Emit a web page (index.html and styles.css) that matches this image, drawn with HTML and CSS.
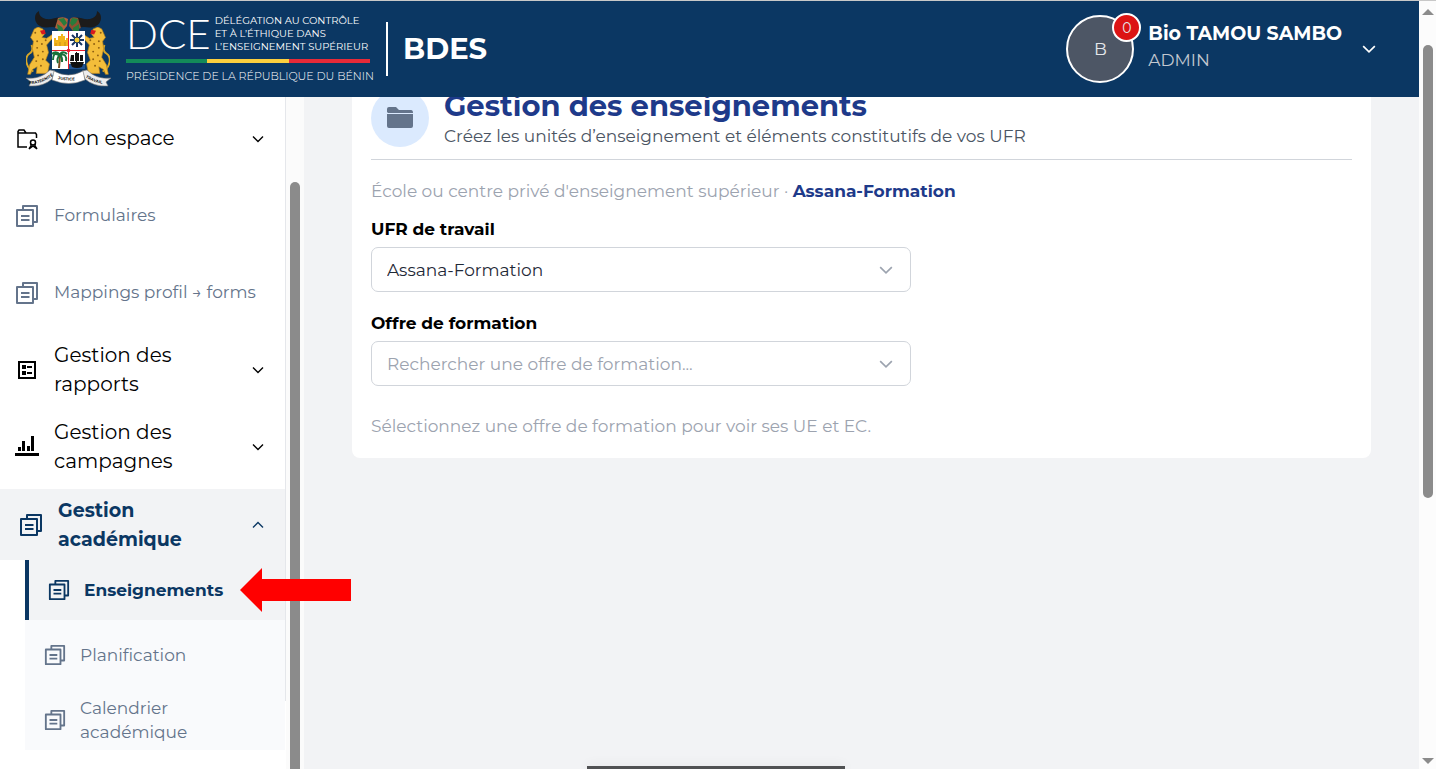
FILE: index.html
```html
<!DOCTYPE html>
<html lang="fr">
<head>
<meta charset="utf-8">
<meta name="viewport" content="width=device-width, initial-scale=1">
<title>BDES - Gestion des enseignements</title>
<link rel="stylesheet" href="styles.css">
</head>
<body>
<svg class="defs" width="0" height="0" aria-hidden="true">
  <symbol id="pages" viewBox="0 0 24 24"><g fill="none" stroke="currentColor" stroke-width="2" stroke-linejoin="round"><path d="M2 6h16v16H2z"/><path d="M8 6V2h14v16h-4M6 12h8.500M6 16h8.500"/></g></symbol>
  <symbol id="chevron" viewBox="0 0 12 8"><path d="M1 1.500l5 5 5-5" fill="none" stroke="currentColor" stroke-width="1.400"/></symbol>
  <symbol id="leopard" viewBox="0 0 28 56"><path d="M7 47C-1 43-3 32 3 28c4-2 3-7 2-9" fill="none" stroke="#d9a827" stroke-width="2"/><path d="M8 2l4-2 5 2 2 5-3 4 5 1 6-4 1 3-7 8 2 8-3 8 4 4-2 10H10l1-7-5 3-2 5H1l2-10 5-8-2-9 1-8-3-4z" fill="#f3bd3a" stroke="#b98218" stroke-width=".7"/><path d="M14 4l5-1 1 4-4 1z" fill="#d71920"/><g fill="#8d5f12"><circle cx="9" cy="6" r="1"/><circle cx="11" cy="15" r="1"/><circle cx="16" cy="18" r="1"/><circle cx="11" cy="22" r="1"/><circle cx="17" cy="26" r="1"/><circle cx="12" cy="30" r="1"/><circle cx="17" cy="34" r="1"/><circle cx="10" cy="36" r="1"/><circle cx="15" cy="41" r="1"/><circle cx="20" cy="14" r="1"/></g></symbol>
</svg>

<div class="window">
  <div class="app">
    <header class="topbar">
      <div class="brand">
        <svg class="crest" viewBox="0 0 88 78" role="img" aria-label="Armoiries du Bénin">
          <use href="#leopard" x="2" y="17" width="28" height="53"/>
          <use href="#leopard" width="28" height="53" transform="translate(86 17) scale(-1 1)"/>
          <path d="M15 1c-4 2-5 7-3 11 3 6 10 6 16 5 4 0 6 1 8 3l3-12c-6-2-10 2-17 1-4-1-7-3-7-8zM73 1c4 2 5 7 3 11-3 6-10 6-16 5-4 0-6 1-8 3L49 8c6-2 10 2 17 1 4-1 7-3 7-8z" fill="#1c1b1b"/>
          <path d="M34 8q6-2 10 1l-1 7-4 5-8-3z" fill="#b0603a"/><path d="M54 8q-6-2-8 1l-1 7 4 5 8-3z" fill="#8d5030"/>
          <path d="M34 9l6-1 3 5-3 3-3-4zM33 14l5 3 2 4h-6zM54 9l-6-1-2 5 2 3 4-3zM55 14l-6 4v3h6z" fill="#287c3b"/>
          <path d="M28 21h33v38H28z" fill="#fff"/>
          <path d="M44.500 54H61v5H44.500z" fill="#225391"/>
          <path d="M30 36v-8h2v2h2v-4h3v-2h2v2h2v4h1v-2h2v8z" fill="#f2b61c"/><path d="M32 33v3m4-4v4m5-4v4" stroke="#c98d18"/>
          <path d="M53 23v14M46 30h14M48 25l10 10m0-10l-10 10" stroke="#173763" stroke-width="2"/><circle cx="53" cy="30" r="3" fill="#f6cf35" stroke="#173763"/>
          <path d="M36 46l-1 12" stroke="#754b20" stroke-width="2"/><path d="M36 46c-6-5-7 0-7 4M36 45c-3-4-6-3-8-1M36 45c1-4 5-3 7-1M36 45c5-2 7 2 6 6M36 45c-3 2-3 6-2 8M36 45c3 3 2 6 2 7" fill="none" stroke="#18713a" stroke-width="2"/>
          <path d="M46 52h14l-2 5q-5 2-10 0zM47 45h3v6h-4zM51 43h4v8h-4zM56 45h3v6h-3zM52 42h1v11h-1z" fill="#111"/>
          <path d="M28 40.500h33M44.500 21v38" stroke="#e61b2b"/><circle cx="44.500" cy="40.500" r="1.800" fill="#e61b2b"/>
          <path d="M2 68q14 2 24-8l5 1-3 8q-9 8-23 7l2-4zM87 68q-14 2-24-8l-5 1 3 8q9 8 23 7l-2-4z" fill="#ededed" stroke="#777" stroke-width=".6"/>
          <path d="M30 61q14 8 29 0l2 9q-16 7-33 0z" fill="#fff" stroke="#777" stroke-width=".6"/>
          <path id="motto-left" d="M5 74q14 0 25-9" fill="none"/>
          <path id="motto-mid" d="M31 68q14 5 29 0" fill="none"/>
          <path id="motto-right" d="M60 66q10 8 25 8" fill="none"/>
          <g class="motto"><text><textPath href="#motto-left">FRATERNITÉ</textPath></text><text><textPath href="#motto-mid" startOffset="3">JUSTICE</textPath></text><text><textPath href="#motto-right" startOffset="2">TRAVAIL</textPath></text></g>
        </svg>
        <div class="identity">
          <div class="identity-main"><span class="dce">DCE</span><span class="delegation">DÉLÉGATION AU CONTRÔLE<br>ET À L’ÉTHIQUE DANS<br>L’ENSEIGNEMENT SUPÉRIEUR</span></div>
          <div class="flag"></div>
          <div class="presidency">PRÉSIDENCE DE LA RÉPUBLIQUE DU BÉNIN</div>
        </div>
        <div class="product">BDES</div>
      </div>
      <button class="account" type="button">
        <span class="avatar">B<span class="badge">0</span></span>
        <span class="account-text"><strong>Bio TAMOU SAMBO</strong><span>ADMIN</span></span>
        <svg class="account-chevron"><use href="#chevron"/></svg>
      </button>
    </header>

    <div class="body">
      <aside class="sidebar">
        <nav class="nav">
          <button class="item" type="button">
            <svg class="icon" viewBox="0 0 24 24" fill="none" stroke="currentColor" stroke-width="1.500"><path d="M12 20H3V4.500L4 3h5l2 3h9.500l1 1.500V11M3 6h8"/><circle cx="18" cy="15.500" r="2.500"/><path d="M16 17v2l-2 3M20 17v2l2 3M14 22l4-3 4 3"/></svg>
            <span class="label">Mon espace</span><svg class="chevron"><use href="#chevron"/></svg></button>
          <a class="item link" href="#formulaires"><svg class="icon"><use href="#pages"/></svg><span class="label">Formulaires</span></a>
          <a class="item link" href="#mappings"><svg class="icon"><use href="#pages"/></svg><span class="label">Mappings profil → forms</span></a>
          <button class="item" type="button">
            <svg class="icon" viewBox="0 0 24 24"><path d="M4 4h16v16H4z" fill="none" stroke="currentColor" stroke-width="2"/><path d="M7 7h4v4H7zM12 8h5v2h-5zM7 13h4v4H7zM12 14h5v2h-5z"/></svg>
            <span class="label">Gestion des rapports</span><svg class="chevron"><use href="#chevron"/></svg></button>
          <button class="item" type="button">
            <svg class="icon" viewBox="0 0 24 24"><path d="M0 18h24v3H0zM3 12h3v4H3zM7 6h3v10H7zM12 11h3v5h-3zM16 1h3v15h-3z"/></svg>
            <span class="label">Gestion des campagnes</span><svg class="chevron"><use href="#chevron"/></svg></button>
          <button class="item open" type="button" aria-expanded="true"><svg class="icon"><use href="#pages"/></svg><span class="label">Gestion académique</span><svg class="chevron up"><use href="#chevron"/></svg></button>
          <div class="submenu">
            <a class="sub current" href="#enseignements"><svg class="icon"><use href="#pages"/></svg><span>Enseignements</span></a>
            <a class="sub tall" href="#planification"><svg class="icon"><use href="#pages"/></svg><span>Planification</span></a>
            <a class="sub" href="#calendrier"><svg class="icon"><use href="#pages"/></svg><span>Calendrier<br>académique</span></a>
          </div>
        </nav>
        <div class="side-scroll"><div class="side-thumb"></div></div>
      </aside>

      <main class="content">
        <section class="card">
          <div class="card-head">
            <div class="round"><svg viewBox="0 0 28 24"><path d="M1 6V3q0-2 2-2h7l3 3h12q2 0 2 3H2zM1 8h26v12q0 2-2 2H3q-2 0-2-2z" fill="currentColor"/></svg></div>
            <div><h1>Gestion des enseignements</h1><p>Créez les unités d’enseignement et éléments constitutifs de vos UFR</p></div>
          </div>
          <p class="school">École ou centre privé d'enseignement supérieur · <strong>Assana-Formation</strong></p>
          <div class="field">
            <label for="ufr">UFR de travail</label>
            <div class="picker"><select id="ufr"><option>Assana-Formation</option></select><svg><use href="#chevron"/></svg></div>
          </div>
          <div class="field">
            <label for="offre">Offre de formation</label>
            <div class="picker"><select id="offre" class="empty"><option>Rechercher une offre de formation...</option></select><svg><use href="#chevron"/></svg></div>
          </div>
          <p class="hint">Sélectionnez une offre de formation pour voir ses UE et EC.</p>
        </section>
      </main>
    </div>
  </div>
  <div class="page-scroll">
    <svg class="tip" viewBox="0 0 12 6"><path d="M6 0l6 6H0z"/></svg>
    <div class="page-thumb"></div>
    <svg class="tip end" viewBox="0 0 12 6"><path d="M0 0h12L6 6z"/></svg>
  </div>
</div>
<svg class="pointer" viewBox="0 0 111 44" aria-hidden="true"><path d="M0 22L22 0v11h89v22H22v11z"/></svg>
<div class="dock"></div>
</body>
</html>
```

FILE: styles.css
```css
* { box-sizing: border-box; }
body {
  margin: 0;
  height: 100vh;
  overflow: hidden;
  background: #f2f3f5;
  color: #000;
  font: 17px/24px Montserrat, Inter, sans-serif;
}
h1, p { margin: 0; }
button { border: 0; background: none; font: inherit; color: inherit; text-align: left; }
a { color: inherit; text-decoration: none; }
.defs { position: absolute; }
.window { display: flex; height: 100vh; border-top: 1px solid #c8c8c8; }
.app { flex: 1; min-width: 0; display: flex; flex-direction: column; }

.topbar {
  flex: none;
  height: 96px;
  display: flex;
  justify-content: space-between;
  align-items: center;
  padding: 0 43px 0 24px;
  background: #0b3763;
  color: #fff;
}
.brand { display: flex; align-items: center; }
.crest { width: 88px; height: 78px; margin-right: 14px; }
.motto { font-size: 4px; font-weight: 700; fill: #222; }
.identity { width: 244px; padding-bottom: 2px; white-space: nowrap; }
.identity-main { display: flex; gap: 4px; align-items: center; height: 39px; }
.dce { font-family: Lato, sans-serif; font-size: 42px; font-weight: 300; line-height: 39px; }
.delegation { font-size: 10px; line-height: 13px; }
.flag {
  height: 4px;
  margin: 6px 0;
  background: linear-gradient(90deg, #138a59 33.3%, #fccf3e 33.3% 66.6%, #e72a38 66.6%);
}
.presidency { font-size: 11px; line-height: 14px; font-weight: 300; }
.product {
  display: flex;
  align-items: center;
  height: 54px;
  margin-left: 16px;
  padding-left: 15px;
  border-left: 2px solid #fff;
  font-size: 29px;
  font-weight: 700;
}
.account { display: flex; align-items: center; padding: 0; }
.avatar {
  position: relative;
  display: grid;
  place-items: center;
  width: 68px;
  height: 68px;
  margin-right: 14px;
  border: 2px solid #fff;
  border-radius: 50%;
  background: #4d5665;
  color: #e5e7eb;
}
.badge {
  position: absolute;
  top: -4px;
  right: -9px;
  display: grid;
  place-items: center;
  width: 29px;
  height: 29px;
  border: 2px solid #fff;
  border-radius: 50%;
  background: #dc1414;
  font-size: 14px;
}
.account-text { display: flex; flex-direction: column; line-height: 26px; color: #c3c8d0; padding-bottom: 5px; }
.account-text strong { color: #fff; font-size: 19px; font-weight: 700; }
.account-chevron { width: 14px; height: 10px; margin-left: 20px; }

.body { flex: 1; min-height: 0; display: flex; }
.sidebar { display: flex; flex: none; width: 304px; background: #fff; overflow: hidden; }
.nav {
  flex: 1;
  height: calc(100vh - 165px);
  padding-top: 3px;
  border-right: 1px solid #e5e7eb;
}
.item {
  display: flex;
  align-items: center;
  width: 100%;
  height: 77px;
  padding: 0 21px 0 15px;
  font-size: 20px;
  line-height: 29px;
}
.icon { flex: none; width: 24px; height: 24px; }
.label { flex: 1; padding: 0 36px 0 15px; }
.link { font-size: 17px; color: #64748b; }
.link .label { padding-right: 0; white-space: nowrap; }
.chevron { flex: none; width: 12px; height: 8px; }
.up { transform: rotate(180deg); }
.open { height: 71px; margin-top: 4px; padding-left: 19px; background: #f2f3f5; color: #0b3763; font-size: 19px; font-weight: 700; }
.submenu { margin-left: 25px; background: #f9fafc; color: #64748b; }
.sub { display: flex; align-items: center; gap: 14px; height: 60px; padding-left: 19px; }
.sub .icon { width: 22px; height: 22px; }
.tall { height: 70px; }
.current { border-left: 4px solid #0b3763; background: #f2f3f5; color: #0b3763; font-weight: 700; }
.side-scroll { width: 18px; padding: 85px 4px 0; background: #fbfbfb; }
.side-thumb { height: 100%; border-radius: 5px 5px 0 0; background: #8b8b8b; }

.content { flex: 1; min-width: 0; padding: 0 48px; overflow: hidden; }
.card { margin-top: -29px; padding: 20px 19px; border-radius: 8px; background: #fff; }
.card-head {
  display: flex;
  align-items: center;
  gap: 15px;
  padding-bottom: 11px;
  border-bottom: 1px solid #d1d5db;
  color: #4b5563;
}
.round { display: grid; place-items: center; width: 58px; height: 58px; border-radius: 50%; background: #dbeafe; color: #64748b; }
.round svg { width: 28px; height: 24px; }
h1 { font-size: 29px; line-height: 36px; font-weight: 700; color: #1e3a8a; }
.school { margin: 19px 0 14px; color: #9ca3af; }
.school strong { color: #1e3a8a; font-weight: 700; }
.field { width: 55%; margin-bottom: 19px; }
.field label { display: block; margin-bottom: 6px; font-weight: 700; }
.picker { position: relative; }
.picker select {
  display: block;
  width: 100%;
  height: 45px;
  padding: 0 40px 0 15px;
  border: 1px solid #d1d5db;
  border-radius: 7px;
  appearance: none;
  background: #fff;
  color: #1f2937;
  font: inherit;
}
.picker .empty { color: #9ca3af; }
.picker svg { position: absolute; right: 18px; top: 18px; width: 14px; height: 10px; color: #9ca3af; pointer-events: none; }
.hint { margin-top: 28px; color: #9ca3af; }

.page-scroll { display: flex; flex-direction: column; align-items: center; width: 17px; padding: 8px 0 5px; background: #fcfcfc; }
.tip { width: 12px; height: 6px; fill: #8b8b8b; }
.page-thumb { width: 10px; height: 60%; margin-top: 30px; border-radius: 5px; background: #8b8b8b; }
.end { margin-top: auto; }
.pointer { position: absolute; left: 240px; top: 568px; width: 111px; height: 44px; fill: #f00; }
.dock { position: absolute; left: 587px; bottom: 0; width: 258px; height: 3px; background: #505153; box-shadow: 0 0 12px rgba(0, 0, 0, .12); }
```
